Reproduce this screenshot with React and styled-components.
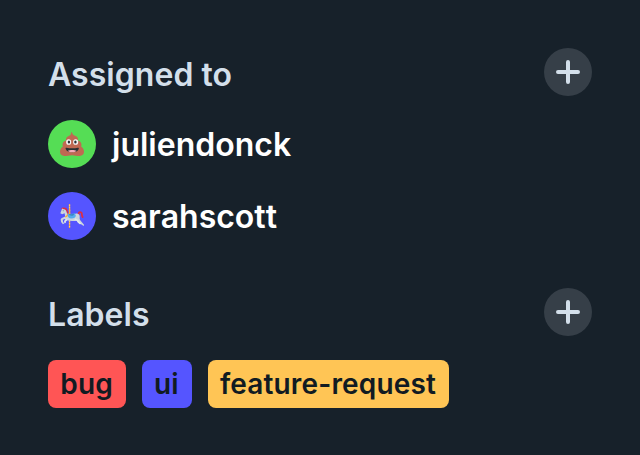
import React from "react";
import styled, { createGlobalStyle } from "styled-components";

const GlobalStyle = createGlobalStyle`
  * { box-sizing: border-box; }
  body { margin: 0; background: #17212a; }
`;

const Panel = styled.main`
  width: 640px;
  height: 455px;
  padding: 48px;
  background: #17212a;
  color: #fff;
  font-family: Inter, sans-serif;
  display: flex;
  flex-direction: column;
  gap: 48px;
`;

const Section = styled.section`
  display: flex;
  flex-direction: column;
  gap: 24px;
`;

const Header = styled.header`
  display: flex;
  align-items: flex-start;
  justify-content: space-between;
  height: 48px;
`;

const Title = styled.h2`
  margin: 3px 0 0;
  font-size: 32px;
  line-height: 48px;
  font-weight: 600;
  letter-spacing: 0.05px;
  color: #d3dfea;
`;

const AddButton = styled.button`
  width: 48px;
  height: 48px;
  padding: 0;
  border: 0;
  border-radius: 50%;
  background: #363f48;
  display: grid;
  place-items: center;
`;

const People = styled.ul`
  list-style: none;
  margin: 0;
  padding: 0;
  display: flex;
  flex-direction: column;
  gap: 24px;
`;

const Person = styled.li`
  display: flex;
  align-items: center;
  gap: 16px;
  height: 48px;
`;

const Avatar = styled.span`
  width: 48px;
  height: 48px;
  border-radius: 50%;
  background: ${(p) => p.$color};
  display: grid;
  place-items: center;
`;

const Name = styled.span`
  font-size: 32px;
  line-height: 48px;
  padding-top: 1px;
  font-weight: 600;
  font-kerning: none;
`;

const Tags = styled.div`
  display: flex;
  gap: 16px;
`;

const Tag = styled.span`
  height: 48px;
  padding: 0 12.8px 0 12.3px;
  border-radius: 8px;
  background: ${(p) => p.$color};
  color: #111b22;
  font-size: 28px;
  line-height: 48px;
  font-weight: 600;
  letter-spacing: 0.16px;
`;

const Plus = () => (
  <svg width="24" height="24" viewBox="0 0 24 24" fill="none" stroke="#d3dfea" strokeWidth="4" strokeLinecap="round">
    <path d="M12 2v20M2 12h20" />
  </svg>
);

const Poop = () => (
  <svg width="24" height="24" viewBox="0 0 36 36">
    <path fill="#bf6952" d="M17 .5c-1 1 .2 2.500-1.500 4C13.500 6.200 9.500 7 9 10.500c-.1 1 0 1.600.3 2.200C6 13.300 3.800 16 3.800 19c0 1 .2 1.900.6 2.700C1.600 23 0 26.300 0 29.800 0 33.300 2.700 36 6.400 36c4.400 0 7.500-1.200 11.600-1.200S25.200 36 29.600 36c3.700 0 6.400-2.700 6.400-6.200 0-3.500-1.600-6.800-4.400-8.100.4-.8.600-1.700.6-2.700 0-3-2.200-5.700-5.500-6.300.3-.6.4-1.200.3-2.200-.5-3.500-3.300-4.400-5.300-5.300C20 4.400 18.600 3 18 .6c-.1-.5-.6-.5-1-.1Z"/>
    <ellipse cx="13" cy="15" rx="3.800" ry="4.300" fill="#f5f8fa"/>
    <ellipse cx="23.500" cy="15" rx="3.800" ry="4.300" fill="#f5f8fa"/>
    <ellipse cx="13.400" cy="15" rx="1.800" ry="2.300" fill="#292f33"/>
    <ellipse cx="23.100" cy="15" rx="1.800" ry="2.300" fill="#292f33"/>
    <path fill="#292f33" d="M9.700 23.700q8.600 1.500 17.200 0c1.300-.2 1.600.8 1.200 1.800-1.200 3.300-5 5-9.800 5s-8.600-1.700-9.800-5c-.4-1-.1-2 1.200-1.800Z"/>
    <path fill="#f4abba" d="M11.800 28.200c3-1.500 10-1.500 13 0-3.300 3-9.700 3-13 0Z"/>
  </svg>
);

const CarouselHorse = () => (
  <svg width="24" height="24" viewBox="0 0 36 36">
    <path stroke="#ffac33" strokeWidth="1.900" d="M14.300 0v36"/>
    <path stroke="#f4c89a" strokeWidth="1.900" strokeDasharray="1.500 2.500" d="M14.300 1v35"/>
    <path fill="none" stroke="#dd2e44" strokeWidth="2.600" strokeLinecap="round" strokeLinejoin="round" d="M3.500 7C6.500 5.800 9.500 7 10.300 10l.8 3.500M28 15.500c-1-3.800 4.500-4.500 4.800-.8.100 1.800-.4 3 1.200 5"/>
    <path fill="#ccd6dd" d="M3.300 6.800 5.200 8c2.600-.3 4.200 1.700 4.700 4.500l1.300 2.700c4 .8 8 .6 12-.7 3-1 6 .5 6.300 3.500.2 3-.7 4.700 1.500 7.300l2.800 3.200 2.200 2.500c.5 1-.2 2.200-1.600 1.300l-2.800-1.800c-2.600-1.300-5-3.200-6.300-6.300-3.600 1.400-8.600 1.700-13.300.6L8.300 22.200l-4.100 1.600.4 2.800 1.700 2.700-1.900 1L1.600 27 1 22.700l1.200-1.400 5.500-2.600-.8-5-3.600 1.700-2.800-1.700L2.200 9.500Z"/>
    <path fill="#e1e8ed" d="m8 21 3.800 3-3 2.200-.2 2.300-2 .2-.6-3.200 2-2.300Z"/>
    <path fill="#e1e8ed" d="m23 21.500 4 2 3.200 4.200 1.600 2.200-2 .6-3-2.500-1.600-2.500-4-1Z"/>
    <circle cx="4.800" cy="10.300" r=".7" fill="#292f33"/>
    <path fill="none" stroke="#ffac33" strokeWidth="2.200" d="M7.800 19.300c2.600-.5 3.900-2 4.300-4.800"/>
    <path fill="#55acee" d="M11.500 14.500q5.500 1 10.500-.7l1.800 3.300c-.2 3.100-2.800 4.500-6.200 4.500-3.900 0-6.500-1.700-6.100-7.100Z"/>
    <path fill="#3b88c3" d="M13.500 14.800q4 1 7.500-.5c.3 2-1.100 3.500-3.800 3.500-2.300 0-3.700-1.200-3.700-3Z"/>
    <path stroke="#ffac33" strokeWidth="1.900" d="M14.300 7v8"/>
  </svg>
);

const people = [
  { name: "juliendonck", color: "#55dd55", Icon: Poop },
  { name: "sarahscott", color: "#5555ff", Icon: CarouselHorse },
];

const labels = [
  { text: "bug", color: "#ff5555" },
  { text: "ui", color: "#5555ff" },
  { text: "feature-request", color: "#ffc555" },
];

const SectionHeader = ({ title }) => (
  <Header>
    <Title>{title}</Title>
    <AddButton aria-label={`Add to ${title}`}><Plus /></AddButton>
  </Header>
);

export default function App() {
  return (
    <>
      <GlobalStyle />
      <Panel>
        <Section>
          <SectionHeader title="Assigned to" />
          <People>
            {people.map(({ name, color, Icon }) => (
              <Person key={name}>
                <Avatar $color={color}><Icon /></Avatar>
                <Name>{name}</Name>
              </Person>
            ))}
          </People>
        </Section>
        <Section>
          <SectionHeader title="Labels" />
          <Tags>
            {labels.map(({ text, color }) => (
              <Tag key={text} $color={color}>{text}</Tag>
            ))}
          </Tags>
        </Section>
      </Panel>
    </>
  );
}
